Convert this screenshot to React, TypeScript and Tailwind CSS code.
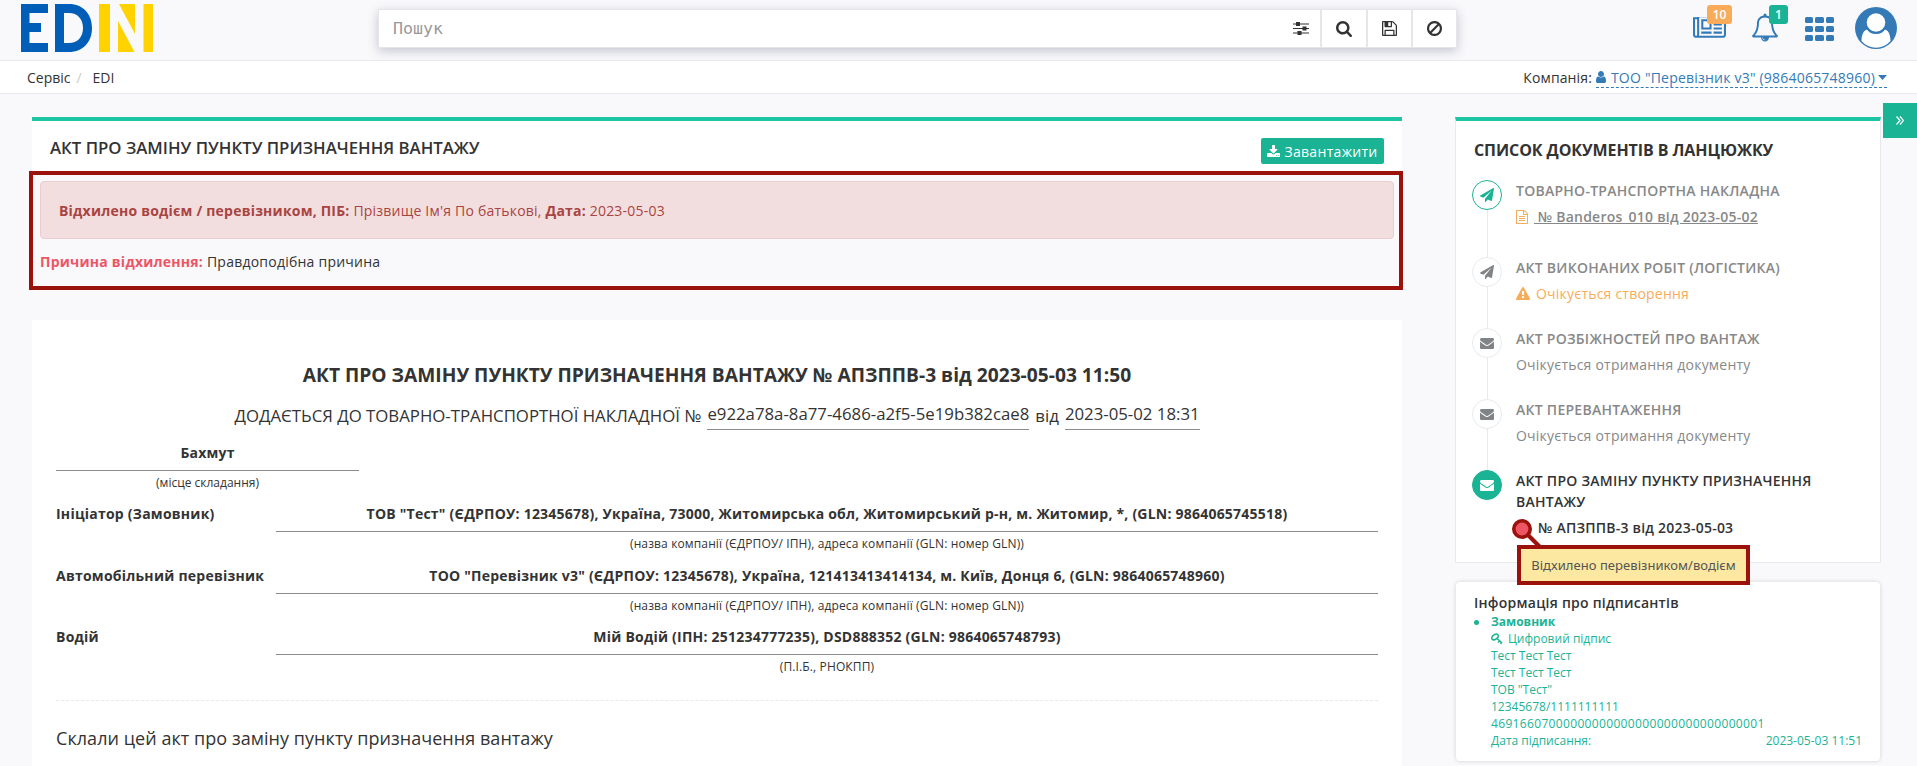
import type { ReactNode } from "react";

const PATHS = {
  news: "M1024 512h-384v384h384v-384zm128 640v128h-640v-128h640zm0-768v640h-640v-640h640zm640 768v128h-512v-128h512zm0-256v128h-512v-128h512zm0-256v128h-512v-128h512zm0-256v128h-512v-128h512zm-1536 960v-960h-128v960q0 26 19 45t45 19 45-19 19-45zm1664 0v-1088h-1536v1088q0 33-11 64h1483q26 0 45-19t19-45zm128-1216v1216q0 80-56 136t-136 56h-1664q-80 0-136-56t-56-136v-1088h256v-128h1792z",
  bell: "M912 1696q0-16-16-16-59 0-101.5-42.5t-42.5-101.5q0-16-16-16t-16 16q0 73 51.5 124.5t124.5 51.5q16 0 16-16zm-666-288h1300q-266-300-266-832 0-51-24-105t-69-103-121.5-80.5-169.5-31.5-169.5 31.5-121.5 80.5-69 103-24 105q0 532-266 832zm1482 0q0 52-38 90t-90 38h-448q0 106-75 181t-181 75-181-75-75-181h-448q-52 0-90-38t-38-90q50-42 91-88t85-119.5 74.5-158.5 50-206 19.5-260q0-152 117-282.5t307-158.5q-8-19-8-39 0-40 28-68t68-28 68 28 28 68q0 20-8 39 190 28 307 158.5t117 282.5q0 139 19.5 260t50 206 74.5 158.5 85 119.5 91 88z",
  user: "M1536 1399q0 109-62.5 187t-150.5 78h-854q-88 0-150.5-78t-62.5-187q0-85 8.5-160.5t31.5-152 58.5-131 94-89 134.5-34.5q131 128 313 128t313-128q76 0 134.5 34.5t94 89 58.5 131 31.5 152 8.5 160.5zm-256-887q0 159-112.5 271.5t-271.5 112.5-271.5-112.5-112.5-271.5 112.5-271.5 271.5-112.5 271.5 112.5 112.5 271.5z",
  search: "M1216 832q0-185-131.5-316.5t-316.5-131.5-316.5 131.5-131.5 316.5 131.5 316.5 316.5 131.5 316.5-131.5 131.5-316.5zm512 832q0 52-38 90t-90 38q-54 0-90-38l-343-342q-179 124-399 124-143 0-273.5-55.5t-225-150-150-225-55.5-273.5 55.5-273.5 150-225 225-150 273.5-55.5 273.5 55.5 225 150 150 225 55.5 273.5q0 220-124 399l343 343q37 37 37 90z",
  ban: "M1440 893q0-161-87-295l-754 753q137 89 297 89 111 0 211.5-43.5t173.5-116.5 116-174.5 43-212.5zm-999 299l755-754q-135-91-300-91-148 0-273 73t-198 199-73 274q0 162 89 299zm1223-299q0 157-61 300t-163.5 246-245 164-298.5 61-298.5-61-245-164-163.5-246-61-300 61-299.5 163.5-245.5 245-164 298.5-61 298.5 61 245 164 163.5 245.5 61 299.5z",
  save: "M512 1536h768v-384h-768v384zm896 0h128v-896q0-14-10-38.5t-20-34.5l-281-281q-10-10-34-20t-39-10v416q0 40-28 68t-68 28h-576q-40 0-68-28t-28-68v-416h-128v1280h128v-416q0-40 28-68t68-28h832q40 0 68 28t28 68v416zm-384-928v-320q0-13-9.5-22.5t-22.5-9.5h-192q-13 0-22.5 9.5t-9.5 22.5v320q0 13 9.5 22.5t22.5 9.5h192q13 0 22.5-9.5t9.5-22.5zm640 32v928q0 40-28 68t-68 28h-1344q-40 0-68-28t-28-68v-1344q0-40 28-68t68-28h928q40 0 88 20t76 48l280 280q28 28 48 76t20 88z",
  download: "M1344 1344q0-26-19-45t-45-19-45 19-19 45 19 45 45 19 45-19 19-45zm256 0q0-26-19-45t-45-19-45 19-19 45 19 45 45 19 45-19 19-45zm128-224v320q0 40-28 68t-68 28h-1472q-40 0-68-28t-28-68v-320q0-40 28-68t68-28h465l135 136q58 56 136 56t136-56l136-136h464q40 0 68 28t28 68zm-325-569q17 41-14 70l-448 448q-18 19-45 19t-45-19l-448-448q-31-29-14-70 17-39 59-39h256v-448q0-26 19-45t45-19h256q26 0 45 19t19 45v448h256q42 0 59 39z",
  plane: "M1764 11q33 24 27 64l-256 1536q-5 29-32 45-14 8-31 8-11 0-24-5l-453-185-242 295q-18 23-49 23-13 0-22-4-19-7-30.5-23.5t-11.5-36.5v-349l864-1059-1069 925-395-162q-37-14-40-55-2-40 32-59l1664-960q15-9 32-9 20 0 36 11z",
  envelope: "M1792 710v794q0 66-47 113t-113 47h-1472q-66 0-113-47t-47-113v-794q44 49 101 87 362 246 497 345 57 42 92.5 65.5t94.5 48 110 24.5h2q51 0 110-24.5t94.5-48 92.5-65.5q170-123 498-345 57-39 100-87zm0-294q0 79-49 151t-122 123q-376 261-468 325-10 7-42.5 31t-54 38.5-52 32.5-57.5 27-50 9h-2q-23 0-50-9t-57.5-27-52-32.5-54-38.5-42.5-31q-91-64-262-182.5t-205-142.5q-62-42-117-115.5t-55-136.5q0-78 41.5-130t118.5-52h1472q65 0 112.5 47t47.5 113z",
  file: "M1596 380q28 28 48 76t20 88v1152q0 40-28 68t-68 28h-1344q-40 0-68-28t-28-68v-1600q0-40 28-68t68-28h896q40 0 88 20t76 48zm-444-244v376h376q-10-29-22-41l-313-313q-12-12-41-22zm384 1528v-1024h-416q-40 0-68-28t-28-68v-416h-768v1536h1280zm-1024-864q0-14 9-23t23-9h704q14 0 23 9t9 23v64q0 14-9 23t-23 9h-704q-14 0-23-9t-9-23v-64zm736 224q14 0 23 9t9 23v64q0 14-9 23t-23 9h-704q-14 0-23-9t-9-23v-64q0-14 9-23t23-9h704zm0 256q14 0 23 9t9 23v64q0 14-9 23t-23 9h-704q-14 0-23-9t-9-23v-64q0-14 9-23t23-9h704z",
  warning: "M1024 1375v-190q0-14-9.5-23.5t-22.5-9.5h-192q-13 0-22.5 9.5t-9.5 23.5v190q0 14 9.5 23.5t22.5 9.5h192q13 0 22.5-9.5t9.5-23.5zm-2-374l18-459q0-12-10-19-13-11-24-11h-220q-11 0-24 11-10 7-10 21l17 457q0 10 10 16.5t24 6.5h185q14 0 23.5-6.5t10.5-16.5zm-14-934l768 1408q35 63-2 126-17 29-46.5 46t-63.5 17h-1536q-34 0-63.5-17t-46.5-46q-37-63-2-126l768-1408q17-31 47-49t65-18 65 18 47 49z",
};

function Icon({ name, className, box = "0 0 1792 1792" }: { name: keyof typeof PATHS; className: string; box?: string }) {
  return (
    <svg viewBox={box} className={`shrink-0 ${className}`} fill="currentColor">
      <path d={PATHS[name]} />
    </svg>
  );
}

function Logo() {
  return (
    <svg viewBox="0 0 132 48" className="h-12 w-[132px]">
      <path fill="#005eb8" d="M0 0h27v9H8.500v10h11.500v9H8.500v11H27v9H0z" />
      <path fill="#005eb8" fillRule="evenodd" d="M34 0h14c14 0 23 10 23 24s-9 24-23 24H34zM43 9v30h5c8.500 0 14-6 14-15s-5.500-15-14-15z" />
      <path fill="#ffd200" d="M78 0h11v48H78zM122.500 0h9.500v48h-9.500zM98 0h16v30zM97 17l16.500 31H97z" />
    </svg>
  );
}

function Header() {
  return (
    <header className="flex h-[61px] items-start border-b border-[#e7eaec] bg-[#f9f9fb]">
      <div className="ml-[21px] mt-1 w-[357px]">
        <Logo />
      </div>
      <div className="mt-[9px] flex h-[39px] w-[1079px] items-stretch border border-[#e5e6e7] bg-white text-[#333] shadow-[0_3px_10px_rgba(60,60,100,0.28)]">
        <div className="flex-1 self-center pl-[14px] font-['DejaVu_Sans_Mono',monospace] text-[16.600px] leading-6 text-[#999]">Пошук</div>
        <div className="flex w-[27px] items-center">
          <svg viewBox="0 0 16 14" className="h-[14px] w-4" fill="currentColor">
            <path d="M0 1.500h16v1H0zM0 6h16v1H0zM0 10.500h16v1H0z" />
            <path d="M3 0h4v4H3zM9.500 4.500h4v4h-4zM4.500 9h4v4h-4z" />
          </svg>
        </div>
        <div className="flex w-[46px] items-center justify-center border-l-2 border-[#e5e6e7]">
          <Icon name="search" className="size-4" box="64 128 1664 1664" />
        </div>
        <div className="flex w-[45px] items-center justify-center border-l-2 border-[#e5e6e7]">
          <Icon name="save" className="size-[15px]" box="128 128 1536 1536" />
        </div>
        <div className="flex w-[45px] items-center justify-center border-l-2 border-[#e5e6e7]">
          <Icon name="ban" className="size-[15px]" box="128 125 1536 1536" />
        </div>
      </div>
      <div className="ml-[236px] flex pt-[5px] text-[#337ab7]">
        <div className="relative w-[59px] pt-[12px]">
          <Icon name="news" className="h-[23px] w-[33px]" box="0 256 2048 1408" />
          <span className="absolute left-[14px] top-0 flex h-[19px] w-[25px] items-center justify-center rounded-[3px] bg-[#f8ac59] text-[12px] font-semibold text-white">10</span>
        </div>
        <div className="relative w-[53px] pt-[8px]">
          <Icon name="bell" className="h-[29px] w-[26px]" box="64 0 1664 1792" />
          <span className="absolute left-[17px] top-0 flex h-[19px] w-[19px] items-center justify-center rounded-[3px] bg-[#1ab394] text-[12px] font-semibold text-white">1</span>
        </div>
        <div className="grid h-[35px] w-[29px] grid-cols-3 content-start gap-x-[2px] gap-y-[3px] pt-[12px]">
          {Array.from({ length: 9 }, (_, i) => (
            <span key={i} className="h-[6px] rounded-[1.500px] bg-[#337ab7]" />
          ))}
        </div>
        <svg viewBox="0 0 42 42" className="ml-[21px] mt-[2px] size-[42px]">
          <circle cx="21" cy="21" r="21" fill="#337ab7" />
          <path fill="#fff" d="M6.500 34c0-6 2-11.500 6.500-11.500 2 2.500 5 4 8 4s6-1.500 8-4c4.500 0 6.500 5.500 6.500 11.500a19 19 0 0 1-29 0z" />
          <circle cx="21" cy="15.500" r="9.300" fill="#fff" />
          <path d="M12 21a10.500 10.500 0 0 0 18 0" fill="none" stroke="#337ab7" strokeWidth="1.800" />
        </svg>
      </div>
    </header>
  );
}

function Breadcrumbs() {
  return (
    <nav className="flex h-[33px] items-center justify-between border-b border-[#e7eaec] bg-white pl-[27px] pr-[30px]">
      <div className="flex">
        <span>Сервіс</span>
        <span className="ml-[6px] w-4 text-[#ccc]">/</span>
        <span>EDI</span>
      </div>
      <div className="flex items-center">
        <span className="mr-1 tracking-[0.13px]">Компанія:</span>
        <span className="mt-px flex h-[21px] items-center border-b border-dashed border-[#337ab7] tracking-[0.21px] text-[#337ab7]">
          <Icon name="user" className="mr-[5px] h-3 w-[10px]" box="256 128 1280 1536" />
          ТОО "Перевізник v3" (9864065748960)
          <svg viewBox="0 0 9 5" className="ml-[3px] h-[5px] w-[9px]" fill="currentColor">
            <path d="M0 0h9L4.500 5z" />
          </svg>
        </span>
      </div>
    </nav>
  );
}

function Party({ label, value, note, height }: { label: string; value: string; note: string; height: string }) {
  return (
    <div className={`flex ${height}`}>
      <div className="w-[220px] pt-[2px] font-bold leading-5 tracking-[0.24px]">{label}</div>
      <div className="flex-1 text-center">
        <div className="h-[30px] border-b border-[#8c8c8f] pt-[2px] font-bold leading-5 tracking-[0.22px]">{value}</div>
        <div className="pt-1 text-[12px] leading-4 tracking-[0.13px]">{note}</div>
      </div>
    </div>
  );
}

function Main() {
  const note = "(назва компанії (ЄДРПОУ/ ІПН), адреса компанії (GLN: номер GLN))";
  return (
    <main className="ml-[29px] mt-[23px] w-[1374px] shrink-0">
      <div className="ml-[3px] mr-px flex h-[54px] items-start justify-between border-t-4 border-[#1ec5a5] bg-white px-[18px]">
        <h1 className="mt-[15px] text-[16.800px] font-semibold leading-6">АКТ ПРО ЗАМІНУ ПУНКТУ ПРИЗНАЧЕННЯ ВАНТАЖУ</h1>
        <button className="mt-[17px] flex h-[26px] w-[123px] items-center justify-center rounded-[2px] bg-[#1ab394] text-[14px] tracking-[0.32px] text-white">
          <Icon name="download" className="mr-1 h-3 w-[13px]" box="64 0 1664 1536" />
          Завантажити
        </button>
      </div>
      <section className="h-[119px] border-4 border-[#9b110c] pl-[7px] pr-[5px] pt-[6px] tracking-[0.21px]">
        <div className="flex h-[58px] items-center rounded-[4px] border border-[#ebccd1] bg-[#f2dede] pl-[18px] text-[#a94442]">
          <p>
            <b>Відхилено водієм / перевізником, ПІБ:</b> Прізвище Ім'я По батькові, <b>Дата:</b> 2023-05-03
          </p>
        </div>
        <p className="mt-[13px] leading-5 tracking-[0.23px]">
          <b className="text-[#ed5565]">Причина відхилення:</b> Правдоподібна причина
        </p>
      </section>
      <article className="ml-[3px] mr-px mt-[30px] h-[446px] bg-white px-6">
        <h2 className="pt-[42px] text-center text-[19.200px] font-bold leading-[26px]">АКТ ПРО ЗАМІНУ ПУНКТУ ПРИЗНАЧЕННЯ ВАНТАЖУ № АПЗППВ-3 від 2023-05-03 11:50</h2>
        <div className="mt-[13px] flex h-[30px] justify-center text-[16.800px] leading-6">
          <span className="mr-[6px] mt-[3px]">ДОДАЄТЬСЯ ДО ТОВАРНО-ТРАНСПОРТНОЇ НАКЛАДНОЇ №</span>
          <span className="h-[29px] border-b border-[#8c8c8f] pt-px">e922a78a-8a77-4686-a2f5-5e19b382cae8</span>
          <span className="mx-[6px] mt-[3px]">від</span>
          <span className="h-[29px] border-b border-[#8c8c8f] pt-px">2023-05-02 18:31</span>
        </div>
        <div className="mt-[10px] h-[61px] w-[303px] text-center">
          <div className="h-[30px] border-b border-[#8c8c8f] pt-[2px] font-bold leading-5 tracking-[0.2px]">Бахмут</div>
          <div className="pt-1 text-[12px] leading-4">(місце складання)</div>
        </div>
        <Party label="Ініціатор (Замовник)" value={'ТОВ "Тест" (ЄДРПОУ: 12345678), Україна, 73000, Житомирська обл, Житомирський р-н, м. Житомир, *, (GLN: 9864065745518)'} note={note} height="h-[62px]" />
        <Party label="Автомобільний перевізник" value={'ТОО "Перевізник v3" (ЄДРПОУ: 12345678), Україна, 121413413414134, м. Київ, Донця 6, (GLN: 9864065748960)'} note={note} height="h-[61px]" />
        <Party label="Водій" value="Мій Водій (ІПН: 251234777235), DSD888352 (GLN: 9864065748793)" note="(П.І.Б., РНОКПП)" height="h-[75px]" />
        <div className="border-t border-dashed border-[#e7eaec]" />
        <h3 className="pt-[23px] text-[18px] font-medium leading-7 tracking-[0.05px]">Склали цей акт про заміну пункту призначення вантажу</h3>
      </article>
    </main>
  );
}

function Step({ icon, tone, height, last, children }: { icon: "plane" | "envelope"; tone: string; height: string; last?: boolean; children: ReactNode }) {
  return (
    <li className={`flex ${height}`}>
      <div className="flex w-[30px] flex-col items-center">
        <span className={`flex size-[30px] shrink-0 items-center justify-center rounded-full border ${tone}`}>
          <Icon name={icon} className="size-[14px]" />
        </span>
        {!last && <span className="w-px flex-1 bg-[#e7eaec]" />}
      </div>
      <div className="ml-[14px] flex-1 tracking-[0.22px]">{children}</div>
    </li>
  );
}

function Chain() {
  const idle = "border-[#e7eaec] text-[#808486]";
  const title = "font-semibold leading-[21px] tracking-[0.26px] text-[#888]";
  return (
    <section className="relative h-[446px] border border-t-4 border-[#e7eaec] border-t-[#1ec5a5] bg-white pl-4">
      <h2 className="ml-[2px] pt-[17px] text-[16px] font-bold leading-6 tracking-[-0.08px]">СПИСОК ДОКУМЕНТІВ В ЛАНЦЮЖКУ</h2>
      <ul className="mt-[18px]">
        <Step icon="plane" tone="border-[#1ab394] text-[#1ab394]" height="h-[77px]">
          <div className={title}>ТОВАРНО-ТРАНСПОРТНА НАКЛАДНА</div>
          <div className="mt-[5px] flex items-center font-semibold leading-[21px] text-[#888]">
            <Icon name="file" className="mr-[6px] h-[14px] w-3 text-[#f8ac59]" box="128 0 1536 1792" />
            <span className="whitespace-pre underline"> № Banderos_010 від 2023-05-02</span>
          </div>
        </Step>
        <Step icon="plane" tone={idle} height="h-[71px]">
          <div className={title}>АКТ ВИКОНАНИХ РОБІТ (ЛОГІСТИКА)</div>
          <div className="mt-[5px] flex items-center leading-[21px] text-[#f8ac59]">
            <Icon name="warning" className="mr-[6px] size-[14px]" />
            Очікується створення
          </div>
        </Step>
        <Step icon="envelope" tone={idle} height="h-[71px]">
          <div className={title}>АКТ РОЗБІЖНОСТЕЙ ПРО ВАНТАЖ</div>
          <div className="mt-[5px] leading-[21px] text-[#888]">Очікується отримання документу</div>
        </Step>
        <Step icon="envelope" tone={idle} height="h-[71px]">
          <div className={title}>АКТ ПЕРЕВАНТАЖЕННЯ</div>
          <div className="mt-[5px] leading-[21px] text-[#888]">Очікується отримання документу</div>
        </Step>
        <Step icon="envelope" tone="border-[#1ab394] bg-[#1ab394] text-white" height="h-[80px]" last>
          <div className="w-[310px] font-semibold leading-[21px] tracking-[0.26px]">АКТ ПРО ЗАМІНУ ПУНКТУ ПРИЗНАЧЕННЯ ВАНТАЖУ</div>
          <div className="mt-[5px] pl-[22px] font-semibold leading-[21px]">№ АПЗППВ-3 від 2023-05-03</div>
        </Step>
      </ul>
      <svg viewBox="0 0 40 34" className="absolute left-[56px] top-[398px] h-[34px] w-10">
        <path d="M14 14L31 31" stroke="#9b110c" strokeWidth="4" />
        <circle cx="10" cy="10" r="8.200" fill="#ed5565" stroke="#9b110c" strokeWidth="3.600" />
      </svg>
      <div className="absolute left-[61px] top-[424px] z-10 flex h-10 w-[233px] items-center justify-center border-4 border-[#9b110c] bg-[#fce8a0] pt-[2px] font-['Noto_Sans',sans-serif] text-[13px] tracking-[0.05px] text-[#555]">Відхилено перевізником/водієм</div>
    </section>
  );
}

function Signers() {
  return (
    <section className="mx-px mt-[19px] h-[179px] rounded-[4px] bg-white pl-[18px] pr-[18px] pt-[10px] shadow-[0_0_4px_rgba(0,0,0,0.16)]">
      <h3 className="text-[14px] font-semibold leading-[21px] tracking-[0.24px]">Інформація про підписантів</h3>
      <ul className="text-[12px] leading-[17px] text-[#1ab394]">
        <li className="flex">
          <span className="mr-[12px] mt-[7px] size-[5px] rounded-full bg-[#1ab394]" />
          <div className="flex-1">
            <div className="font-bold">Замовник</div>
            <div className="flex items-center">
              <svg viewBox="0 0 12 12" className="mr-[5px] size-3" fill="none" stroke="currentColor" strokeWidth="1.500">
                <ellipse cx="4" cy="4" rx="3.600" ry="2.300" transform="rotate(-35 4 4)" />
                <path d="M6 5.500L11 10M8.500 7.800L7.200 9.600M10.600 9.400L9.500 11" />
              </svg>
              Цифровий підпис
            </div>
            <div>Тест Тест Тест</div>
            <div>Тест Тест Тест</div>
            <div>ТОВ "Тест"</div>
            <div>12345678/1111111111</div>
            <div className="tracking-[0.34px]">46916607000000000000000000000000000001</div>
            <div className="flex justify-between">
              <span>Дата підписання:</span>
              <span>2023-05-03 11:51</span>
            </div>
          </div>
        </li>
      </ul>
    </section>
  );
}

export default function App() {
  return (
    <div className="h-[766px] overflow-hidden bg-[#f9f9fb] font-['Open_Sans',sans-serif] text-[14px] text-[#333]">
      <Header />
      <Breadcrumbs />
      <div className="flex items-start">
        <Main />
        <aside className="ml-[52px] mt-[23px] w-[426px] shrink-0">
          <Chain />
          <Signers />
        </aside>
        <button className="ml-[2px] mt-[9px] flex h-[35px] w-[34px] shrink-0 items-center justify-center bg-[#1ab394] text-white">
          <svg viewBox="0 0 8 9" className="h-[9px] w-2" fill="none" stroke="currentColor" strokeWidth="1.200">
            <path d="M.5.5l3.500 4-3.500 4M4 .5l3.500 4-3.500 4" />
          </svg>
        </button>
      </div>
    </div>
  );
}
